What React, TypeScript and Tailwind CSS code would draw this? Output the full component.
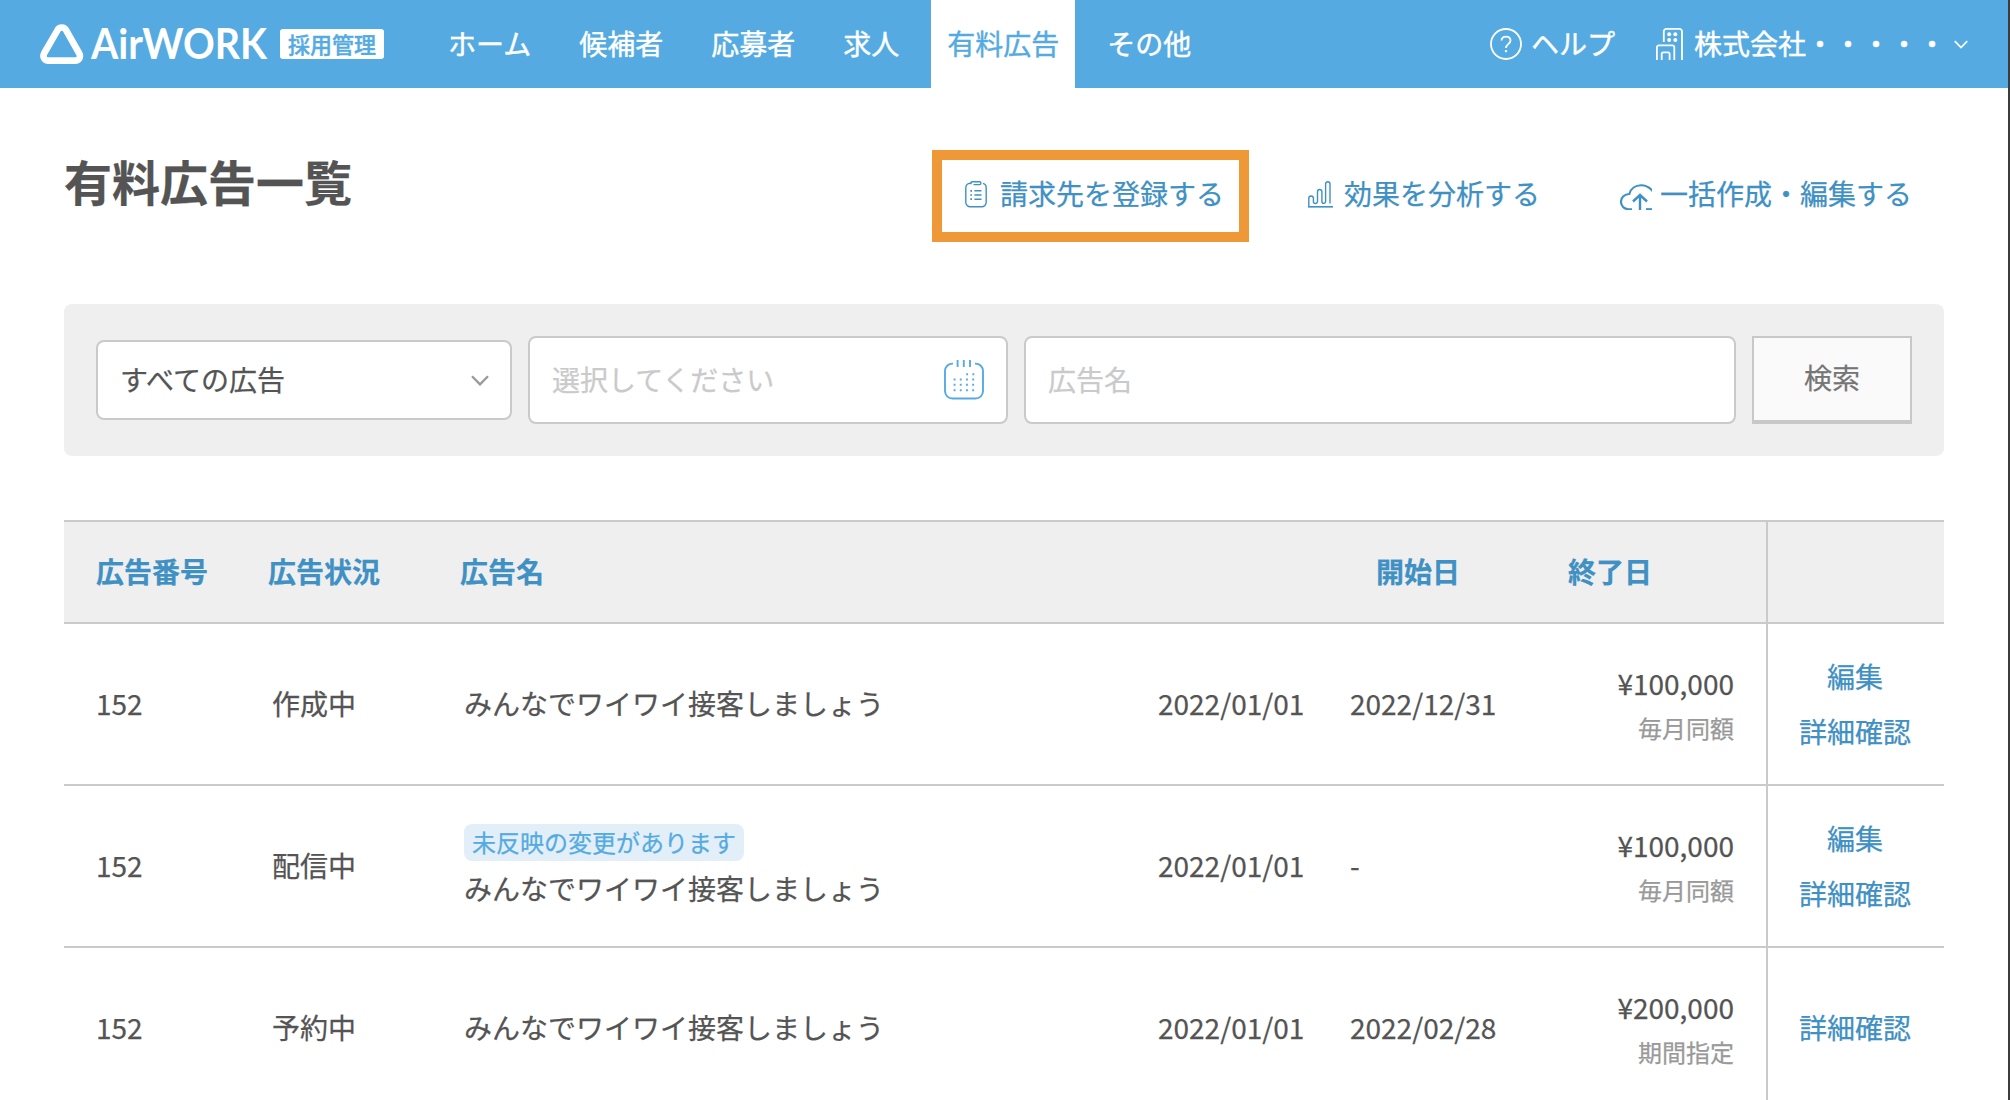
import type { ReactNode } from "react";

const ads = [
  { no: "152", status: "作成中", notice: "", name: "みんなでワイワイ接客しましょう", start: "2022/01/01", end: "2022/12/31", price: "¥100,000", term: "毎月同額", actions: ["編集", "詳細確認"] },
  { no: "152", status: "配信中", notice: "未反映の変更があります", name: "みんなでワイワイ接客しましょう", start: "2022/01/01", end: "-", price: "¥100,000", term: "毎月同額", actions: ["編集", "詳細確認"] },
  { no: "152", status: "予約中", notice: "", name: "みんなでワイワイ接客しましょう", start: "2022/01/01", end: "2022/02/28", price: "¥200,000", term: "期間指定", actions: ["詳細確認"] },
];

const navItems = ["ホーム", "候補者", "応募者", "求人", "有料広告", "その他"];

function Logo() {
  return (
    <a className="flex items-center">
      <svg width="44" height="40" viewBox="0 0 44 40" fill="none" stroke="#fff">
        <path d="M17.400 6.400C19 2.600 24.500 2.600 26.200 6.400L39 29C41.300 33 39 36.600 35 36.600H8.500C4.500 36.600 2.200 33 4.300 29Z" strokeWidth="6.600" strokeLinejoin="round" />
      </svg>
      <svg className="ml-1" width="182" height="60" viewBox="-2 -10 182 60" fill="#fff">
        <text x="1" y="35" fontFamily="Lato, sans-serif" fontWeight="700" fontSize="41.500" textLength="176" lengthAdjust="spacingAndGlyphs">
          AirWORK
        </text>
      </svg>
      <span className="ml-[10px] flex h-[30px] w-[104px] items-center justify-center rounded-[3px] bg-white pb-0.5 text-[22px] leading-none font-medium text-[#55abe1]">
        採用管理
      </span>
    </a>
  );
}

function HelpIcon() {
  return (
    <svg width="32" height="32" viewBox="0 0 32 32" fill="none" stroke="currentColor" strokeWidth="1.8">
      <circle cx="16" cy="16" r="15" />
      <path d="M11.500 12.500C11.700 10 13.500 8.700 16 8.700C18.700 8.700 20.500 10.200 20.500 12.500C20.500 15.800 16 16 16 20" />
      <path d="M16 22.200V24.200" strokeWidth="2.200" />
    </svg>
  );
}

function CompanyIcon() {
  return (
    <svg width="28" height="32" viewBox="0 0 28 32" fill="none" stroke="currentColor" strokeWidth="1.8">
      <path d="M7.800 14V3.500A2.600 2.600 0 0 1 10.400 0.900H23.400A2.600 2.600 0 0 1 26 3.500V32" />
      <path d="M0.900 32V19.300A2 2 0 0 1 2.900 17.300H16.300A2 2 0 0 1 18.300 19.300V32" />
      <path d="M5.700 32V26A1.600 1.600 0 0 1 7.300 24.400H12A1.600 1.600 0 0 1 13.600 26V32" />
      <g fill="currentColor" stroke="none">
        <circle cx="13.200" cy="6.200" r="2" />
        <circle cx="19.300" cy="6.200" r="2" />
        <circle cx="13.200" cy="12" r="2" />
        <circle cx="19.300" cy="12" r="2" />
      </g>
    </svg>
  );
}

function BillingIcon() {
  return (
    <svg width="22" height="27" viewBox="0 0 22 27" fill="none" stroke="currentColor" strokeWidth="1.400">
      <path d="M6 2.200H5.200A4.500 4.500 0 0 0 0.800 6.700V21.200A4.500 4.500 0 0 0 5.300 25.700H16.700A4.500 4.500 0 0 0 21.200 21.200V6.700A4.500 4.500 0 0 0 18 2.300" />
      <path d="M6 3.300V1.700A1 1 0 0 1 7 0.700H14.800A1 1 0 0 1 15.800 1.700V2.600A1 1 0 0 1 14.800 3.600H8.500" />
      <path d="M9.400 9.800H16.500M9.400 14H16.500M9.400 18.200H16.500" strokeWidth="1.500" />
      <path d="M5.300 9.800H7M5.300 14H7M5.300 18.200H7" strokeWidth="1.700" />
    </svg>
  );
}

function AnalyzeIcon() {
  return (
    <svg width="25" height="27" viewBox="0 0 25 27" fill="none" stroke="currentColor" strokeWidth="1.400">
      <path d="M0.800 25.500V17.300A2.300 2.300 0 0 1 5.400 17.300V20.500A2 2 0 0 0 9.500 20.500V10.700A2.200 2.200 0 0 1 13.900 10.700V20.500A1.800 1.800 0 0 0 17.600 20.500V2.900A2.200 2.200 0 0 1 22 2.900V22.500" />
      <path d="M0 25.800H25" strokeWidth="1.600" />
    </svg>
  );
}

function UploadIcon() {
  return (
    <svg width="32" height="26" viewBox="0 0 32 26" fill="none" stroke="currentColor" strokeWidth="2.100">
      <path d="M12 25.200H8.500C4 25.200 1 22 1 17.800C1 13.500 4.500 10 9.300 10C10.800 4.500 15.500 1.200 21 1.200C26 1.200 30 3.500 33 7.500" />
      <path d="M13 17.500L20 11L27 17.500M20 11V26" strokeWidth="2.400" />
      <path d="M26 25.200H32" />
    </svg>
  );
}

function CalendarIcon() {
  return (
    <svg width="40" height="40" viewBox="0 0 40 40" fill="none" stroke="#55abe1" strokeWidth="1.9">
      <path d="M9 3.600H8.500A7.500 7.500 0 0 0 1 11.100V31A7.500 7.500 0 0 0 8.500 38.500H31.500A7.500 7.500 0 0 0 39 31V11.100A7.500 7.500 0 0 0 31.500 3.600H31" />
      <path d="M13.600 0V7M19.800 0V7M26 0V7" />
      <path d="M22.200 14.200H31M9.600 19.500H31M9.600 24.800H31M9.600 30.200H31" strokeDasharray="1.900 4.300" />
    </svg>
  );
}

function Chevron({ className, width, height }: { className: string; width: number; height: number }) {
  return (
    <svg className={className} width={width} height={height} viewBox="0 0 18 11" fill="none" stroke="currentColor" strokeWidth="2.300">
      <path d="M1 1.200L9 9.400L17 1.200" />
    </svg>
  );
}

function ActionLink({ icon, children }: { icon: ReactNode; children: ReactNode }) {
  return (
    <a className="flex h-[65px] items-center text-[#3f90c3]">
      {icon}
      {children}
    </a>
  );
}

function Header() {
  return (
    <header className="flex h-[88px] items-center bg-[#55abe1] pl-10 text-white [-webkit-text-stroke:0.4px]">
      <Logo />
      <nav className="ml-12 flex h-full gap-4">
        {navItems.map((item) => (
          <a
            key={item}
            className={
              item === "有料広告"
                ? "flex items-center bg-white px-4 pb-0.5 text-[#55abe1]"
                : "flex items-center px-4 pb-0.5"
            }
          >
            {item}
          </a>
        ))}
      </nav>
      <div className="mr-10 ml-auto flex items-center">
        <HelpIcon />
        <span className="ml-[9px] pb-0.5">ヘルプ</span>
        <span className="ml-[41px]">
          <CompanyIcon />
        </span>
        <span className="ml-[10px] pb-0.5">株式会社・・・・・</span>
        <Chevron className="ml-2" width={14} height={9} />
      </div>
    </header>
  );
}

function Filters() {
  return (
    <div className="flex h-[152px] items-center gap-4 rounded-lg bg-[#efefef] px-8">
      <div className="flex h-20 w-[416px] items-center justify-between rounded-lg border-2 border-[#cacaca] bg-white pr-[21px] pl-[22px]">
        <span className="pb-0.5">すべての広告</span>
        <Chevron className="text-[#999]" width={18} height={11} />
      </div>
      <div className="flex h-[88px] w-[480px] items-center justify-between rounded-lg border-2 border-[#cacaca] bg-white px-[22px] text-[#cacaca]">
        <span className="pb-0.5">選択してください</span>
        <CalendarIcon />
      </div>
      <div className="flex h-[88px] w-[712px] items-center rounded-lg border-2 border-[#cacaca] bg-white px-[22px] text-[#cacaca]">
        <span className="pb-0.5">広告名</span>
      </div>
      <button className="h-[88px] w-40 border-2 border-b-4 border-[#c8c8c8] bg-[#fafafa] pb-1 text-[#757575]">検索</button>
    </div>
  );
}

function AdTable() {
  return (
    <div className="mt-16 border-t-2 border-[#cacaca]">
      <div className="flex h-[102px] border-b-2 border-[#cacaca] bg-[#efefef] font-bold text-[#3f90c3]">
        <div className="flex w-[1704px] items-center border-r-2 border-[#cacaca] pb-0.5 pl-8">
          <span className="w-[172px]">広告番号</span>
          <span className="w-48">広告状況</span>
          <span className="w-[916px]">広告名</span>
          <span className="w-48">開始日</span>
          <span>終了日</span>
        </div>
      </div>
      {ads.map((ad) => (
        <div key={ad.status} className="flex h-[162px] border-b-2 border-[#cacaca]">
          <div className="flex w-[1704px] items-center border-r-2 border-[#cacaca] pr-8 pb-0.5 pl-8">
            <span className="w-44">{ad.no}</span>
            <span className="w-48">{ad.status}</span>
            <div className="w-[694px]">
              {ad.notice && (
                <span className="mt-0.5 mb-1.5 flex h-[37px] w-fit items-center rounded-lg bg-[#e3eff8] px-2 text-2xl text-[#55abe1]">
                  {ad.notice}
                </span>
              )}
              <p>{ad.name}</p>
            </div>
            <span className="w-48">{ad.start}</span>
            <span>{ad.end}</span>
            <div className="ml-auto pt-[5px] text-right">
              <p>{ad.price}</p>
              <p className="mt-0.5 text-2xl leading-[44px] text-[#999]">{ad.term}</p>
            </div>
          </div>
          <div className="flex flex-1 flex-col items-center justify-center pr-0.5 pb-px leading-[55px] text-[#3f90c3]">
            {ad.actions.map((action) => (
              <a key={action}>{action}</a>
            ))}
          </div>
        </div>
      ))}
    </div>
  );
}

export default function App() {
  return (
    <div className="h-[1100px] overflow-hidden border-r-2 border-[#3c3c3c] bg-white font-['Noto_Sans_CJK_JP',sans-serif] text-[28px] leading-[42px] text-[#545454] [-webkit-text-stroke:0.25px]">
      <Header />
      <main className="pr-16 pl-16">
        <div className="flex h-[216px] items-start">
          <h1 className="pt-14 text-5xl leading-[72px] font-bold">有料広告一覧</h1>
          <div className="mt-[62px] ml-[580px] h-[92px] w-[317px] border-10 border-[#ef9837] pl-[23px]">
            <ActionLink icon={<span className="mt-[3px] mr-[13px]"><BillingIcon /></span>}>請求先を登録する</ActionLink>
          </div>
          <div className="mt-[72px] ml-[59px]">
            <ActionLink icon={<span className="mt-[3px] mr-[11px]"><AnalyzeIcon /></span>}>効果を分析する</ActionLink>
          </div>
          <div className="mt-[72px] ml-20">
            <ActionLink icon={<span className="mt-2 mr-2"><UploadIcon /></span>}>一括作成・編集する</ActionLink>
          </div>
        </div>
        <Filters />
        <AdTable />
      </main>
    </div>
  );
}
